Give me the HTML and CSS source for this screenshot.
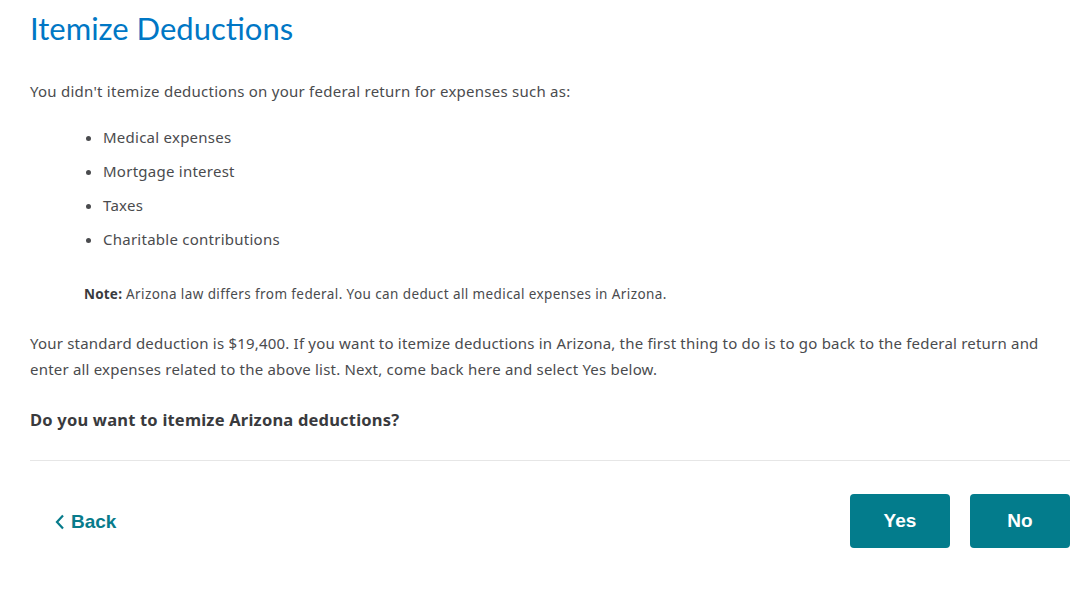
FILE: index.html
```html
<!DOCTYPE html>
<html>
<head>
<meta charset="utf-8">
<link rel="stylesheet" href="styles.css">
</head>
<body>
<div class="page">
  <h1 class="title">Itemize Deductions</h1>
  <p class="text intro">You didn't itemize deductions on your federal return for expenses such as:</p>
  <ul class="list">
    <li>Medical expenses</li>
    <li>Mortgage interest</li>
    <li>Taxes</li>
    <li>Charitable contributions</li>
  </ul>
  <p class="note"><b>Note:</b> Arizona law differs from federal. You can deduct all medical expenses in Arizona.</p>
  <p class="text para">Your standard deduction is $19,400. If you want to itemize deductions in Arizona, the first thing to do is to go back to the federal return and enter all expenses related to the above list. Next, come back here and select Yes below.</p>
  <p class="question">Do you want to itemize Arizona deductions?</p>
  <div class="divider"></div>
  <div class="actions">
    <a class="back" href="#"><svg class="chev" width="10" height="16" viewBox="0 0 10 16"><path d="M8 1.5 L2 8 L8 14.5" fill="none" stroke="currentColor" stroke-width="2.2"/></svg>Back</a>
    <div class="btns">
      <button class="btn">Yes</button>
      <button class="btn">No</button>
    </div>
  </div>
</div>
</body>
</html>
```
FILE: styles.css
```css
html, body { margin: 0; padding: 0; background: #fff; }
.page { padding: 0 7px 0 30px; font-family: "Noto Sans", Lato, sans-serif; color: #4a4b4e; }
.title { margin: 0; padding-top: 10px; font-family: Lato, sans-serif; font-weight: 400; font-size: 31px; line-height: 36px; color: #0077c5; }
.text { font-size: 15px; letter-spacing: 0.25px; line-height: 26px; margin: 0; }
.intro { margin-top: 32px; }
.list { margin: 16px 0 0; padding-left: 73px; font-size: 15px; letter-spacing: 0.25px; }
.list li { line-height: 34px; }
.note { margin: 25px 0 0 54px; font-size: 13.5px; letter-spacing: 0.4px; line-height: 26px; }
.note b { font-weight: 700; color: #393a3d; letter-spacing: 0.2px; }
.para { margin-top: 23px; letter-spacing: 0.2px; }
.question { margin: 25px 0 0; font-size: 16.5px; letter-spacing: 0.2px; font-weight: 700; line-height: 26px; color: #393a3d; }
.divider { margin-top: 27px; height: 1px; background: #e6e6e6; }
.actions { display: flex; justify-content: space-between; align-items: center; margin-top: 33px; }
.back { display: flex; align-items: center; gap: 6px; margin-left: 25px; color: #077b8b; text-decoration: none; font-family: "Liberation Sans", Arial, sans-serif; font-weight: 700; font-size: 19px; position: relative; top: 1px; }
.chev { display: block; }
.btns { display: flex; gap: 20px; }
.btn { width: 100px; height: 54px; border: 0; border-radius: 4px; background: #037c8c; color: #fff; font-family: "Liberation Sans", Arial, sans-serif; font-weight: 700; font-size: 19px; cursor: pointer; }
```
